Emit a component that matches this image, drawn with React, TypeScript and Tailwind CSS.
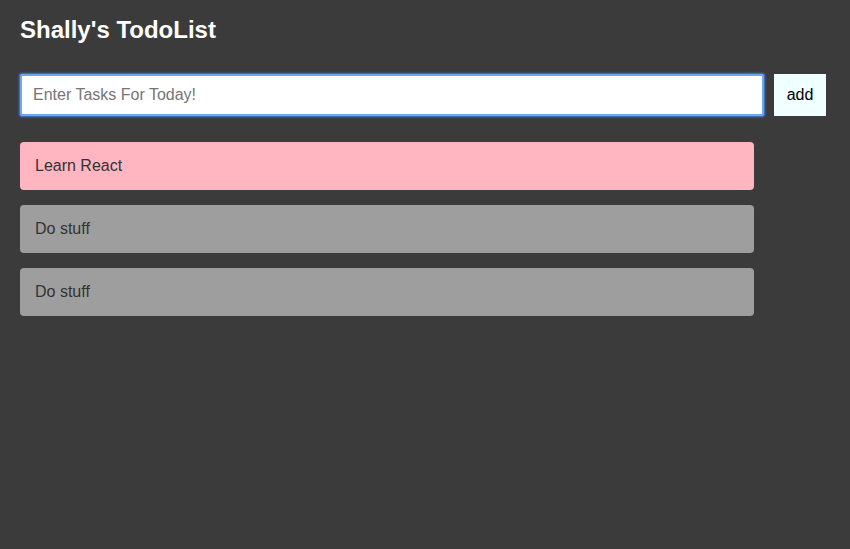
import React from 'react';

const todos = [
    { text: 'Learn React', done: false },
    { text: 'Do stuff', done: true },
    { text: 'Do stuff', done: true },
];

export default function App() {
    return (
        <div className="min-h-[549px] w-full bg-[#3b3b3b] px-[20px] font-['Liberation_Sans',Arial,sans-serif]">
            <h1 className="pt-[16px] text-[24px] leading-[28px] font-bold text-white">Shally's TodoList</h1>

            <div className="mt-[30px] flex items-start">
                <input
                    placeholder="Enter Tasks For Today!"
                    className="h-[42px] w-[744px] bg-white border-2 border-[#6aa8f2] rounded-[2px] shadow-[0_0_2px_1px_#3f7fd4] px-[11px] text-[16px] text-[#333] placeholder:text-[#757575] outline-none"
                />
                <button className="ml-[10px] h-[42px] w-[52px] bg-[#f0ffff] text-[16px] text-black">add</button>
            </div>

            <ul className="mt-[26px] flex flex-col gap-[15px] w-[734px]">
                {todos.map((t, i) => (
                    <li
                        key={i}
                        className={`h-[48px] flex items-center pl-[15px] rounded-[4px] text-[16px] text-[#333] ${t.done ? 'bg-[#9e9e9e]' : 'bg-[#ffb6c1]'}`}
                    >
                        {t.text}
                    </li>
                ))}
            </ul>
        </div>
    );
}
